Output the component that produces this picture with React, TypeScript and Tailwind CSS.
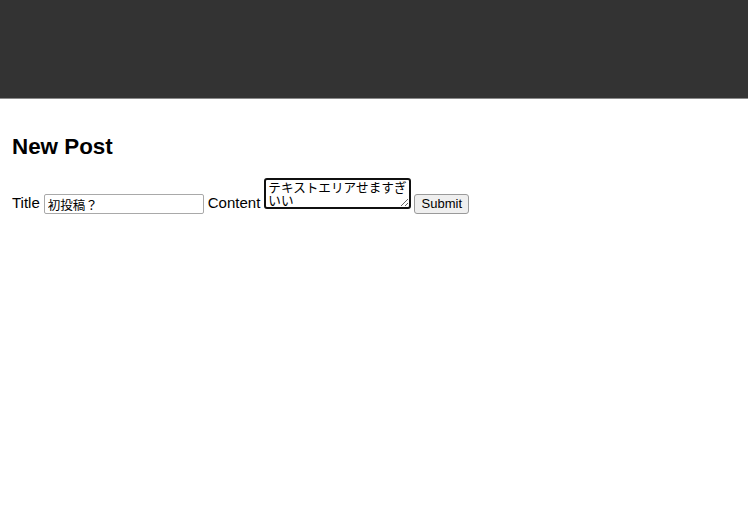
import { useState } from "react";

// New post form — plain header bar + inline form row

export default function App() {
  const [title, setTitle] = useState("初投稿？");
  const [content, setContent] = useState("テキストエリアせますぎいい");

  return (
    <div className="min-h-[507px] bg-white text-black font-['Liberation_Sans','Noto_Sans_CJK_JP',sans-serif]">
      <header className="h-[99px] bg-[#333333] border-b border-[#8a8a8a]" />

      <main className="px-3">
        <h2 className="pt-[34px] text-[22.4px] leading-7 font-bold">New Post</h2>

        <form
          className="mt-[17px] flex items-end text-[15px] leading-[18px]"
          onSubmit={(e) => e.preventDefault()}
        >
          <label htmlFor="title" className="mb-[2px]">Title</label>
          <input
            id="title"
            type="text"
            value={title}
            onChange={(e) => setTitle(e.target.value)}
            className="ml-[4px] w-[160px] h-[20px] px-[3px] border border-[#a9a9a9] rounded-[2px] text-[12.5px] leading-[18px] outline-none"
          />
          <label htmlFor="content" className="ml-[4px] mb-[2px]">Content</label>
          <textarea
            id="content"
            value={content}
            onChange={(e) => setContent(e.target.value)}
            className="ml-[4px] mb-[5px] w-[147px] h-[31px] pl-[2px] pr-0 pt-0 pb-0 border-2 border-[#101010] rounded-[3px] text-[12.6px] leading-[13px] resize overflow-hidden outline-none font-['Noto_Sans_CJK_JP',sans-serif]"
          />
          <button
            type="submit"
            className="ml-[3px] w-[55px] h-[20px] bg-[#efefef] border border-[#9a9a9a] rounded-[3px] text-[13px] leading-[18px]"
          >
            Submit
          </button>
        </form>
      </main>
    </div>
  );
}
